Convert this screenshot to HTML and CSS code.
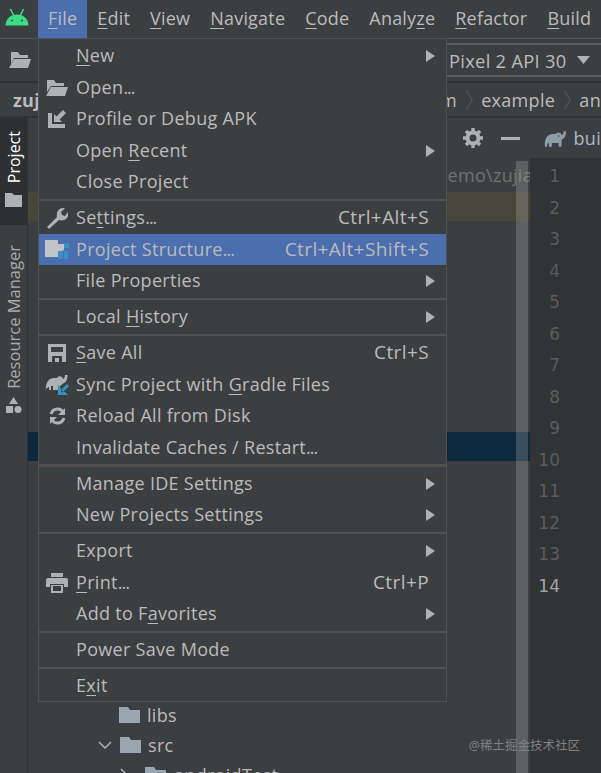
FILE: index.html
```html
<!DOCTYPE html>
<html lang="en">
<head>
  <meta charset="UTF-8">
  <meta name="viewport" content="width=device-width, initial-scale=1.0">
  <title>Android Studio File Menu</title>
  <link rel="stylesheet" href="styles.css">
</head>
<body>
  <div class="ide">

    <!-- Menu bar -->
    <div class="menubar">
      <div class="logo">
        <svg width="24" height="18" viewBox="0 0 24 18">
          <path d="M.5 17.500C1 10 6 6.500 12 6.500s11 3.500 11.500 11z" fill="#3ddc84"/>
          <path d="M5.500 1l3.500 7M18.500 1L15 8" stroke="#3ddc84" stroke-width="1.500" fill="none"/>
          <circle cx="7" cy="12.500" r="1.100" fill="#2f5f45"/>
          <circle cx="17" cy="12.500" r="1.100" fill="#2f5f45"/>
        </svg>
      </div>
      <div class="menubar-item active"><u>F</u>ile</div>
      <div class="menubar-item"><u>E</u>dit</div>
      <div class="menubar-item"><u>V</u>iew</div>
      <div class="menubar-item"><u>N</u>avigate</div>
      <div class="menubar-item"><u>C</u>ode</div>
      <div class="menubar-item">Analy<u>z</u>e</div>
      <div class="menubar-item"><u>R</u>efactor</div>
      <div class="menubar-item"><u>B</u>uild</div>
    </div>

    <!-- Toolbar -->
    <div class="toolbar">
      <svg class="toolbar-folder" width="22" height="16" viewBox="0 0 22 16">
        <path d="M2 0h7l2 3h8v3H5L2 12z" fill="#afb1b3"/>
        <path d="M5 7h17l-3 9H0z" fill="#afb1b3"/>
      </svg>
      <div class="device-picker">
        <span>Pixel 2 API 30</span>
        <svg width="13" height="8" viewBox="0 0 13 8"><path d="M0 0h13L6.500 8z" fill="#afb1b3"/></svg>
      </div>
    </div>

    <!-- Breadcrumbs -->
    <div class="navbar">
      <b class="nav-project">zuj</b>
      <div class="crumbs">
        <span>m</span>
        <svg width="9" height="24" viewBox="0 0 9 24"><path d="M1 1l7 11-7 11" stroke="#5b5e60" fill="none"/></svg>
        <span>example</span>
        <svg width="9" height="24" viewBox="0 0 9 24"><path d="M1 1l7 11-7 11" stroke="#5b5e60" fill="none"/></svg>
        <span>an</span>
      </div>
    </div>

    <div class="workspace">

      <!-- Left tool strip -->
      <div class="strip">
        <div class="strip-tab active">
          <span class="vertical">Project</span>
          <svg width="17" height="14" viewBox="0 0 17 14"><path d="M0 0h7l2 2h8v12H0z" fill="#afb1b3"/></svg>
        </div>
        <div class="strip-tab">
          <span class="vertical">Resource Manager</span>
          <svg width="17" height="17" viewBox="0 0 17 17">
            <path d="M8.500 0l4.500 7H4z" fill="#afb1b3"/>
            <rect x="1" y="9" width="7" height="7" fill="#afb1b3"/>
            <circle cx="13" cy="12.500" r="3.500" fill="#afb1b3"/>
          </svg>
        </div>
      </div>

      <!-- Project panel -->
      <div class="panel">
        <div class="panel-head">
          <svg width="20" height="20" viewBox="0 0 20 20">
            <circle cx="10" cy="10" r="5.500" fill="none" stroke="#afb1b3" stroke-width="4"/>
            <path d="M10 0v20M0 10h20M3 3l14 14M17 3L3 17" stroke="#afb1b3" stroke-width="3.400" stroke-dasharray="3.500 13" fill="none"/>
          </svg>
          <div class="minus"></div>
        </div>
        <div class="panel-body">
          <div class="tree">
            <div class="path-row"><span>demo\zujia</span></div>
            <div class="warn-row"></div>
            <div class="sel-row"></div>
            <div class="tree-row libs">
              <svg width="21" height="16" viewBox="0 0 21 16"><path d="M0 0h9l2 3h10v13H0z" fill="#9aa7b0"/></svg>
              <span>libs</span>
            </div>
            <div class="tree-row src">
              <svg class="chevron" width="14" height="8" viewBox="0 0 14 8"><path d="M1 1l6 6 6-6" stroke="#afb1b3" stroke-width="1.500" fill="none"/></svg>
              <svg width="21" height="16" viewBox="0 0 21 16"><path d="M0 0h9l2 3h10v13H0z" fill="#9aa7b0"/></svg>
              <span>src</span>
            </div>
            <div class="tree-row test">
              <svg class="chevron" width="8" height="14" viewBox="0 0 8 14"><path d="M1 1l6 6-6 6" stroke="#afb1b3" stroke-width="1.500" fill="none"/></svg>
              <svg width="21" height="16" viewBox="0 0 21 16"><path d="M0 0h9l2 3h10v13H0z" fill="#9aa7b0"/></svg>
              <span>androidTest</span>
            </div>
          </div>
          <div class="scrollbar"></div>
        </div>
      </div>

      <!-- Editor -->
      <div class="editor">
        <div class="editor-tab">
          <svg width="23" height="17" viewBox="0 0 23 17">
            <path d="M1 17C0 10 3 4 9 4h3c1-2 3-2 5-1l1 2c1 0 2-2 2-4h2.500c0 4-1 7-3.500 8l-1 1v7h-3v-4H8v4H5v-4c-1 0-2 1-2 4z" fill="#8e9ea6"/>
            <circle cx="15" cy="6" r=".8" fill="#3c3f41"/>
          </svg>
          <span>bui</span>
        </div>
        <div class="gutter">
          <span>1</span><span>2</span><span>3</span><span>4</span><span>5</span><span>6</span><span>7</span>
          <span>8</span><span>9</span><span>10</span><span>11</span><span>12</span><span>13</span>
          <span class="current">14</span>
        </div>
      </div>
    </div>

    <!-- File menu -->
    <div class="menu">
      <div class="menu-row"><i class="icon"></i><span class="label"><u>N</u>ew</span><em class="arrow"></em></div>
      <div class="menu-row">
        <i class="icon">
          <svg width="22" height="16" viewBox="0 0 22 16">
            <path d="M1 0h7l2 3h8v3H5L1 12z" fill="#afb1b3"/>
            <path d="M5 7h17l-3 9H0z" fill="#afb1b3"/>
          </svg>
        </i>
        <span class="label">Open<span class="dots">...</span></span>
      </div>
      <div class="menu-row">
        <i class="icon">
          <svg width="19" height="18" viewBox="0 0 19 18">
            <path d="M0 3h4v11h13v4H0z" fill="#afb1b3"/>
            <path d="M6 11V4l2.500 2.500L15 0l3 3-6.500 6.500L14 12H6z" fill="#afb1b3"/>
          </svg>
        </i>
        <span class="label">Profile or Debug APK</span>
      </div>
      <div class="menu-row"><i class="icon"></i><span class="label">Open <u>R</u>ecent</span><em class="arrow"></em></div>
      <div class="menu-row"><i class="icon"></i><span class="label">Close Project</span></div>
      <div class="menu-sep"></div>

      <div class="menu-row">
        <i class="icon">
          <svg width="21" height="21" viewBox="0 0 21 21">
            <path d="M2 21l-2-2L10 9c-1-4 1-8 5-9 1 0 2 0 3 .5L14 4l1 3 3 1 3-4c1 4-1 7-4 8-2 .5-3 .5-5 0z" fill="#afb1b3"/>
          </svg>
        </i>
        <span class="label">Se<u>t</u>tings<span class="dots">...</span></span>
        <span class="shortcut">Ctrl+Alt+S</span>
      </div>
      <div class="menu-row selected">
        <i class="icon">
          <svg width="24" height="20" viewBox="0 0 24 20">
            <path d="M0 0h13v4h6v6l-4 2v5H0z" fill="#c0c4c9"/>
            <rect x="19" y="3" width="5" height="5" fill="#3592c4"/>
            <rect x="13" y="11" width="5" height="8" fill="#3592c4"/>
            <rect x="19" y="11" width="4" height="8" fill="#3592c4"/>
          </svg>
        </i>
        <span class="label">Project Structure<span class="dots">...</span></span>
        <span class="shortcut">Ctrl+Alt+Shift+S</span>
      </div>
      <div class="menu-row"><i class="icon"></i><span class="label">File Properties</span><em class="arrow"></em></div>
      <div class="menu-sep"></div>

      <div class="menu-row"><i class="icon"></i><span class="label">Local <u>H</u>istory</span><em class="arrow"></em></div>
      <div class="menu-sep"></div>

      <div class="menu-row">
        <i class="icon">
          <svg width="18" height="18" viewBox="0 0 18 18">
            <path d="M0 0h18v18H0z" fill="#afb1b3"/>
            <rect x="3" y="3" width="12" height="5" fill="#3c3f41"/>
            <rect x="4" y="12" width="10" height="6" fill="#3c3f41"/>
            <rect x="7" y="14" width="4" height="4" fill="#afb1b3"/>
          </svg>
        </i>
        <span class="label"><u>S</u>ave All</span>
        <span class="shortcut">Ctrl+S</span>
      </div>
      <div class="menu-row">
        <i class="icon">
          <svg width="24" height="21" viewBox="0 0 24 21">
            <path d="M1 18C0 10 3 4 9 4h3c1-2 3-2 5-1l1 2c1 0 2-2 2-4h2.500c0 4-1 7-3.500 8l-4 3-2 4H8v-4H6v4H4v-3c-1 0-2 1-3 2z" fill="#afb1b3"/>
            <path d="M23 11l-6 6" stroke="#3592c4" stroke-width="3" fill="none"/>
            <path d="M13 11v10h10l-3-3h-4v-4z" fill="#3592c4"/>
          </svg>
        </i>
        <span class="label">Sync Project with <u>G</u>radle Files</span>
      </div>
      <div class="menu-row">
        <i class="icon">
          <svg width="19" height="18" viewBox="0 0 19 18">
            <path d="M3 7c1-3 3-5 6.500-5 2.500 0 4 1 5 2.500" stroke="#afb1b3" stroke-width="3" fill="none"/>
            <path d="M17 1v7h-7z" fill="#afb1b3"/>
            <path d="M16 11c-1 3-3 5-6.500 5-2.500 0-4-1-5-2.500" stroke="#afb1b3" stroke-width="3" fill="none"/>
            <path d="M2 17v-7h7z" fill="#afb1b3"/>
          </svg>
        </i>
        <span class="label">Reload All from Disk</span>
      </div>
      <div class="menu-row"><i class="icon"></i><span class="label">Invalidate Caches / Restart<span class="dots">...</span></span></div>
      <div class="menu-sep"></div>

      <div class="menu-row"><i class="icon"></i><span class="label">Manage IDE Settings</span><em class="arrow"></em></div>
      <div class="menu-row"><i class="icon"></i><span class="label">New Projects Settings</span><em class="arrow"></em></div>
      <div class="menu-sep"></div>

      <div class="menu-row"><i class="icon"></i><span class="label">Export</span><em class="arrow"></em></div>
      <div class="menu-row">
        <i class="icon">
          <svg width="22" height="20" viewBox="0 0 22 20">
            <rect x="5" y="0" width="12" height="4" fill="#afb1b3"/>
            <path d="M2 5h18a2 2 0 0 1 2 2v7h-4v-3H4v3H0V7a2 2 0 0 1 2-2z" fill="#afb1b3"/>
            <path d="M5 12h12v8H5z" fill="#afb1b3"/>
            <rect x="7" y="13" width="8" height="5" fill="#3c3f41"/>
          </svg>
        </i>
        <span class="label"><u>P</u>rint<span class="dots">...</span></span>
        <span class="shortcut">Ctrl+P</span>
      </div>
      <div class="menu-row"><i class="icon"></i><span class="label">Add to F<u>a</u>vorites</span><em class="arrow"></em></div>
      <div class="menu-sep"></div>

      <div class="menu-row"><i class="icon"></i><span class="label">Power Save Mode</span></div>
      <div class="menu-sep"></div>

      <div class="menu-row"><i class="icon"></i><span class="label">E<u>x</u>it</span></div>
    </div>

    <div class="watermark">@稀土掘金技术社区</div>
  </div>
</body>
</html>
```

FILE: styles.css
```css
* {
  box-sizing: border-box;
}

body {
  margin: 0;
  background-color: #3c3f41;
  color: #bbbbbb;
  font-family: "Open Sans", "Noto Sans CJK SC", sans-serif;
  font-size: 18px;
  letter-spacing: 0.3px;
}

u {
  text-underline-offset: 3px;
  text-decoration-thickness: 1px;
}

.ide {
  position: relative;
  width: 601px;
  height: 773px;
  overflow: hidden;
  display: flex;
  flex-direction: column;
  background-color: #3c3f41;
}

/* menu bar */
.menubar {
  height: 38px;
  flex: none;
  display: flex;
  align-items: center;
  letter-spacing: 0.2px;
}

.logo {
  width: 38px;
  height: 38px;
  flex: none;
  display: flex;
  justify-content: center;
  align-items: center;
  padding: 0 4px 4px 0;
}

.menubar-item {
  height: 38px;
  flex: none;
  line-height: 37px;
  padding: 0 10px;
  white-space: nowrap;
}

.menubar-item.active {
  background-color: #4b6eaf;
}

/* toolbar */
.toolbar {
  height: 45px;
  flex: none;
  display: flex;
  align-items: center;
  border-top: 1px solid #505254;
  border-bottom: 2px solid #323232;
}

.toolbar-folder {
  margin-left: 9px;
}

.device-picker {
  margin-left: 408px;
  height: 34px;
  flex: 1;
  display: flex;
  align-items: center;
  gap: 10px;
  padding-left: 10px;
  border-top: 2px solid #5a5d5f;
  border-bottom: 2px solid #5a5d5f;
  white-space: nowrap;
  font-size: 18.300px;
}

/* breadcrumbs */
.navbar {
  height: 35px;
  flex: none;
  display: flex;
  align-items: center;
  justify-content: space-between;
  border-bottom: 2px solid #323232;
}

.nav-project {
  margin-left: 13px;
}

.crumbs {
  display: flex;
  align-items: center;
  gap: 8px;
  width: 161px;
  white-space: nowrap;
  overflow: hidden;
}

/* main area */
.workspace {
  flex: 1;
  min-height: 0;
  display: flex;
}

.strip {
  width: 28px;
  flex: none;
  border-right: 1px solid #323232;
}

.strip-tab {
  display: flex;
  flex-direction: column;
  align-items: center;
  gap: 8px;
  color: #a9abad;
  font-size: 16.500px;
  letter-spacing: 0;
  padding-top: 20px;
}

.strip-tab.active {
  height: 107px;
  gap: 10px;
  padding-top: 13px;
  background-color: #2d2f30;
  color: #ffffff;
  font-size: 16px;
}

.vertical {
  writing-mode: vertical-rl;
  transform: rotate(180deg);
  line-height: 24px;
}

.panel {
  flex: 1;
  min-width: 0;
  display: flex;
  flex-direction: column;
}

.panel-head {
  height: 40px;
  flex: none;
  display: flex;
  align-items: center;
  justify-content: flex-end;
  gap: 18px;
  padding-right: 10px;
}

.minus {
  width: 19px;
  height: 3px;
  background-color: #afb1b3;
}

.panel-body {
  position: relative;
  flex: 1;
  min-height: 0;
}

.tree {
  height: 100%;
}

/* overlay scrollbar, the tree shows through it */
.scrollbar {
  position: absolute;
  top: 3px;
  right: 2px;
  bottom: 0;
  width: 12px;
  background-color: rgba(190, 190, 190, 0.25);
}

.path-row {
  height: 34px;
  display: flex;
  align-items: center;
  justify-content: flex-end;
  color: #6f7173;
  overflow: hidden;
}

.path-row span {
  margin-right: -3px;
}

.warn-row {
  height: 29px;
  background-color: #474639;
}

.sel-row {
  height: 29px;
  margin-top: 211px;
  background-color: #0d293e;
}

.tree-row {
  height: 30px;
  display: flex;
  align-items: center;
  gap: 7px;
  white-space: nowrap;
}

.libs {
  margin-top: 239px;
  padding-left: 91px;
}

.src {
  padding-left: 70px;
}

.src .chevron {
  margin-right: 1px;
}

.test {
  padding-left: 92px;
  gap: 8px;
}

.test .chevron {
  margin-right: 9px;
}

/* editor */
.editor {
  width: 71px;
  flex: none;
  display: flex;
  flex-direction: column;
  background-color: #313335;
}

.editor-tab {
  height: 40px;
  flex: none;
  display: flex;
  align-items: center;
  gap: 7px;
  padding-left: 14px;
  background-color: #3c3f41;
  color: #a9b7c6;
  white-space: nowrap;
  overflow: hidden;
}

.gutter {
  display: flex;
  flex-direction: column;
  padding-top: 3px;
  padding-right: 41px;
  align-items: flex-end;
  color: #5a5d5f;
  font-family: "DejaVu Sans", sans-serif;
  font-size: 17px;
  letter-spacing: 0;
}

.gutter span {
  height: 31.500px;
  line-height: 31.500px;
}

.gutter .current {
  color: #a4a3a3;
}

/* file menu */
.menu {
  position: absolute;
  left: 38px;
  top: 38px;
  width: 409px;
  height: 664px;
  padding-top: 1.250px;
  background-color: #3c3f41;
  border: 1px solid #515151;
}

.menu-row {
  height: 31.500px;
  display: flex;
  align-items: center;
  padding: 0 11px 0 6px;
  white-space: nowrap;
}

.menu-row .label,
.menu-row .shortcut {
  padding-bottom: 2px;
}

.menu-row.selected {
  background-color: #4b6eaf;
}

.menu-sep {
  height: 4.500px;
  padding: 1px 0;
}

.menu-sep::before {
  content: "";
  display: block;
  height: 2.500px;
  background-color: #515151;
}

.icon {
  width: 24px;
  flex: none;
  margin-right: 7px;
  display: flex;
  align-items: center;
  justify-content: center;
}

.label {
  flex: 1;
}

.dots {
  letter-spacing: -1px;
}

.shortcut {
  margin-right: 6px;
  font-size: 19px;
  letter-spacing: 0.4px;
}

.arrow {
  width: 0;
  height: 0;
  border-left: 9px solid #afb1b3;
  border-top: 6px solid transparent;
  border-bottom: 6px solid transparent;
}

.watermark {
  position: absolute;
  right: 21px;
  bottom: 19px;
  font-size: 12.500px;
  letter-spacing: 0;
  color: #7f8183;
}
```
